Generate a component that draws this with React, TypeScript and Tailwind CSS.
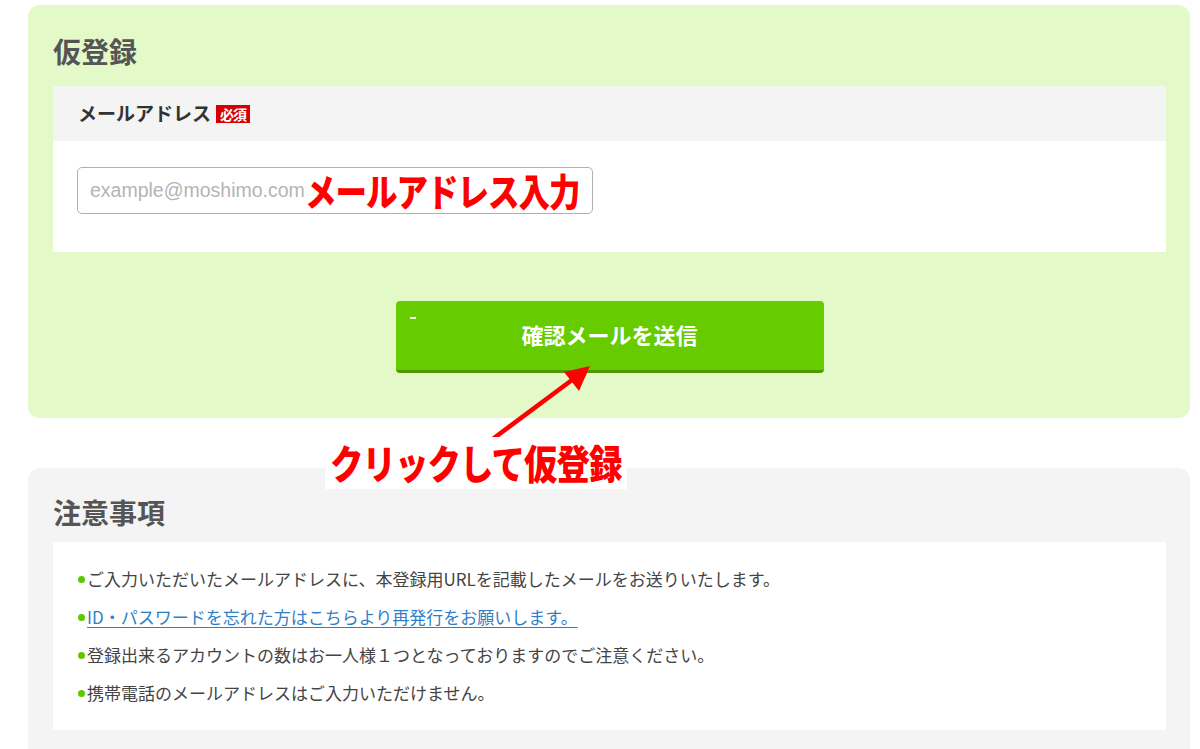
import React from "react";

const jp = "font-['Noto_Sans_CJK_JP','Noto_Sans',sans-serif]";

function Bullet({ children, link }: { children: React.ReactNode; link?: boolean }) {
  return (
    <li className="flex items-center h-[38px]">
      <span className="w-[7px] h-[7px] rounded-full bg-[#5ec700] mr-[2px] shrink-0" />
      {link ? (
        <a className="text-[#2f7fc8] underline underline-offset-[3px] decoration-[#2f7fc8] text-[17px]" href="#">
          {children}
        </a>
      ) : (
        <span className="text-[#444] text-[17px]">{children}</span>
      )}
    </li>
  );
}

export default function App() {
  return (
    <div className={`relative w-[1200px] h-[749px] overflow-hidden bg-white pl-[28px] pr-[10px] ${jp}`}>
      {/* 仮登録 panel */}
      <section className="mt-[5px] rounded-[12px] bg-[#e3f9c7] pl-[25px] pr-[24px] pt-[26px] pb-[45px]">
        <h2 className="text-[28px] leading-[40px] font-bold text-[#555]">仮登録</h2>
        <div className="mt-[15px]">
          <div className="h-[55px] bg-[#f4f4f4] flex items-center pl-[25px] gap-[5px]">
            <span className="text-[19px] font-bold text-[#333]">メールアドレス</span>
            <span className="bg-[#d60000] text-white text-[14px] font-bold leading-[18px] h-[18px] w-[34px] text-center tracking-[-1px]">
              必須
            </span>
          </div>
          <div className="bg-white h-[111px] pt-[26px] pl-[24px]">
            <div className="w-[516px] h-[47px] border border-[#b0b0b0] rounded-[5px] flex items-center pl-[12px] overflow-visible">
              <span className="font-['Liberation_Sans',Arial,sans-serif] text-[19.5px] text-[#b4b4b4]">
                example@moshimo.com
              </span>
              <span className="text-[31.5px] font-black text-[#ff0000] leading-none scale-y-[1.2] inline-block tracking-[-1px] -mt-[2px]">
                メールアドレス入力
              </span>
            </div>
          </div>
        </div>
        <div className="mt-[49px] flex justify-center">
          <button className="relative w-[428px] h-[72px] rounded-[4px] bg-[#66cc00] border-b-[3px] border-[#4c9a00] text-white text-[22px] font-bold pb-[3px]">
            <span className="absolute left-[14px] top-[16px] w-[6px] h-[1.5px] bg-white/90" />
            確認メールを送信
          </button>
        </div>
      </section>

      {/* 注意事項 panel */}
      <section className="mt-[50px] rounded-[12px] bg-[#f4f4f4] pl-[25px] pr-[24px] pt-[24px] pb-[30px]">
        <h2 className="text-[28px] leading-[40px] font-bold text-[#555]">注意事項</h2>
        <ul className="mt-[10px] bg-white pl-[25px] pt-[18px] pb-[18px]">
          <Bullet>ご入力いただいたメールアドレスに、本登録用URLを記載したメールをお送りいたします。</Bullet>
          <Bullet link>ID・パスワードを忘れた方はこちらより再発行をお願いします。</Bullet>
          <Bullet>登録出来るアカウントの数はお一人様１つとなっておりますのでご注意ください。</Bullet>
          <Bullet>携帯電話のメールアドレスはご入力いただけません。</Bullet>
        </ul>
      </section>

      {/* annotation: arrow */}
      <svg className="absolute left-[480px] top-[355px]" width="125" height="95" viewBox="0 0 125 95">
        <line x1="10" y1="86" x2="96" y2="22" stroke="#ff0000" strokeWidth="4.5" strokeLinecap="round" />
        <polygon points="110,11 84,17 99,36" fill="#ff0000" />
      </svg>

      {/* annotation: label */}
      <div className="absolute left-[325px] top-[437px] w-[302px] h-[52px] bg-white flex items-center pl-[5px]">
        <span className="text-[33.5px] font-black text-[#ff0000] leading-none scale-y-[1.2] inline-block tracking-[-1px] -mt-[3px]">
          クリックして仮登録
        </span>
      </div>
    </div>
  );
}
